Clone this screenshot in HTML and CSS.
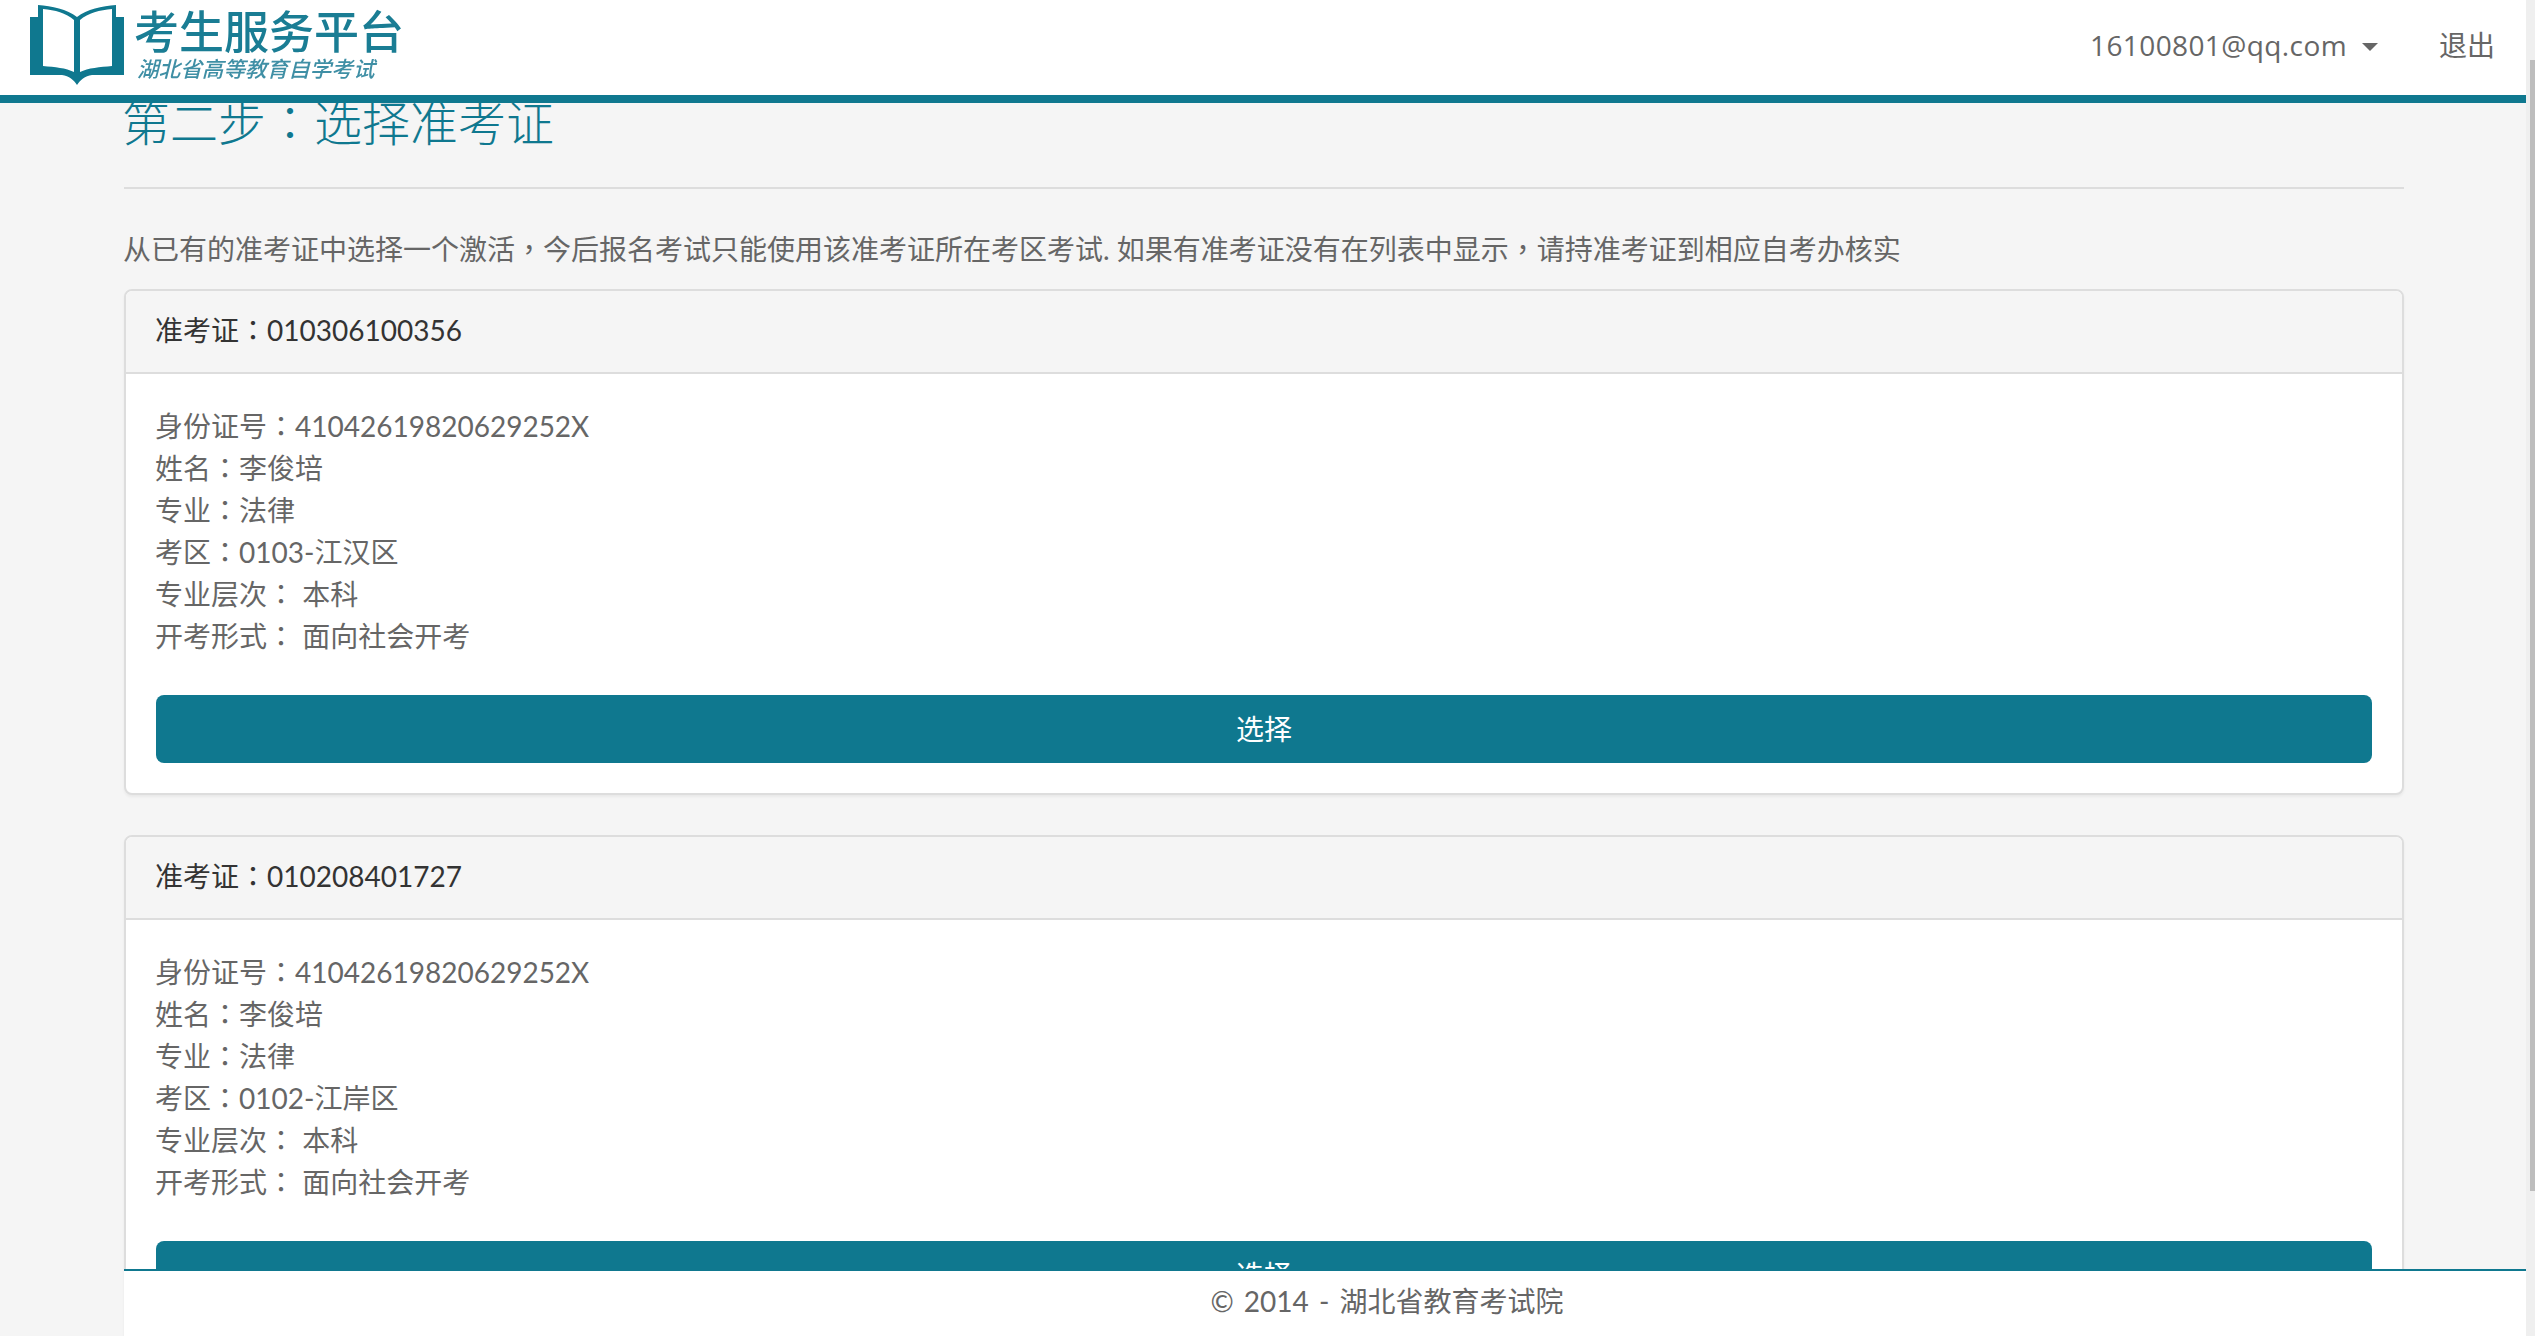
FILE: index.html
```html
<!DOCTYPE html>
<html lang="zh-CN">
<head>
<meta charset="utf-8">
<title>考生服务平台</title>
<link rel="stylesheet" href="styles.css">
</head>
<body>
<header class="topbar">
  <div class="brand">
    <svg class="brand-icon" viewBox="0 0 94 80" aria-hidden="true">
      <path fill="#0f788f" d="M0 12H8V0C22 1 37 4 47 12C57 4 72 1 86 0V12H94V70H62C55 71 50 75 47 80C44 75 39 71 32 70H0Z"/>
      <path fill="#fff" d="M13 4C25 5 36 8 44 15V67C36 63 25 62 13 61Z"/>
      <path fill="#fff" d="M82 4C70 5 58 8 50 15V67C58 63 70 62 82 61Z"/>
    </svg>
    <div class="brand-text">
      <div class="brand-name">考生服务平台</div>
      <div class="brand-sub">湖北省高等教育自学考试</div>
    </div>
  </div>
  <nav class="topnav">
    <span class="user">16100801@qq.com<i class="caret"></i></span>
    <span class="logout">退出</span>
  </nav>
</header>

<main class="content">
  <h1 class="title">第二步<span class="cp">：</span>选择准考证</h1>
  <hr class="rule">
  <p class="intro">从已有的准考证中选择一个激活<span class="cp">，</span>今后报名考试只能使用该准考证所在考区考试. 如果有准考证没有在列表中显示<span class="cp">，</span>请持准考证到相应自考办核实</p>

  <section class="panel">
    <div class="panel-head">准考证<span class="cp">：</span>010306100356</div>
    <div class="panel-body">
      <ul class="facts">
        <li>身份证号<span class="cp">：</span>41042619820629252X</li>
        <li>姓名<span class="cp">：</span>李俊培</li>
        <li>专业<span class="cp">：</span>法律</li>
        <li>考区<span class="cp">：</span>0103-江汉区</li>
        <li>专业层次<span class="cp">：</span> 本科</li>
        <li>开考形式<span class="cp">：</span> 面向社会开考</li>
      </ul>
      <button class="pick">选择</button>
    </div>
  </section>

  <section class="panel">
    <div class="panel-head">准考证<span class="cp">：</span>010208401727</div>
    <div class="panel-body">
      <ul class="facts">
        <li>身份证号<span class="cp">：</span>41042619820629252X</li>
        <li>姓名<span class="cp">：</span>李俊培</li>
        <li>专业<span class="cp">：</span>法律</li>
        <li>考区<span class="cp">：</span>0102-江岸区</li>
        <li>专业层次<span class="cp">：</span> 本科</li>
        <li>开考形式<span class="cp">：</span> 面向社会开考</li>
      </ul>
      <button class="pick">选择</button>
    </div>
  </section>
</main>

<footer class="footer">© 2014 - 湖北省教育考试院</footer>

<div class="scroll-track"><div class="scroll-thumb"></div></div>
</body>
</html>
```
FILE: styles.css
```css
* { box-sizing: border-box; }
html, body { height: 100%; }
body {
  margin: 0;
  overflow: hidden;
  background: #f5f5f5;
  color: #666;
  font-family: Lato, "Noto Sans CJK SC", sans-serif;
  font-size: 28px;
  line-height: 42px;
}
.cp { font-family: "Noto Sans CJK TC", sans-serif; font-feature-settings: "locl" 0; }
.topbar {
  position: fixed;
  top: 0;
  left: 0;
  right: 9px;
  height: 103px;
  z-index: 3;
  display: flex;
  align-items: flex-start;
  justify-content: space-between;
  background: #fff;
  border-bottom: 8px solid #0f788f;
}
.brand { display: flex; gap: 10px; padding: 5px 0 0 30px; }
.brand-icon { width: 94px; height: 80px; display: block; filter: blur(.5px); }
.brand-text { color: #1a7d94; filter: blur(.5px); }
.brand-name {
  font: 500 45px/50px "Noto Sans CJK SC", sans-serif;
  height: 50px;
}
.brand-sub {
  margin-left: 3px;
  font: italic 500 21.6px/26px "Noto Sans CJK SC", sans-serif;
  color: #3f8fa5;
  height: 26px;
}
.topnav { display: flex; align-items: center; height: 89px; padding-right: 31px; }
.user {
  display: flex;
  align-items: center;
  font-family: "Open Sans", sans-serif;
  letter-spacing: .4px;
}
.caret {
  width: 0;
  height: 0;
  margin: 4px 0 0 15px;
  border-top: 8px solid #666;
  border-left: 8px solid transparent;
  border-right: 8px solid transparent;
}
.logout { margin-left: 61px; }
.content {
  height: 100%;
  overflow: hidden;
  padding: 87px 131px 0 124px;
}
.title {
  margin: 0 0 0 -2px;
  height: 66px;
  color: #0f788f;
  font: 300 48px/66px "Noto Sans CJK SC", sans-serif;
}
.rule { height: 2px; margin: 34px 0 0; border: 0; background: #ddd; }
.intro { height: 42px; margin: 38px 0 20px -1px; color: #666; white-space: nowrap; }
.panel {
  margin-bottom: 40px;
  background: #fff;
  border: 2px solid #ddd;
  border-radius: 8px;
  box-shadow: 0 2px 3px rgba(0, 0, 0, .05);
}
.panel-head {
  height: 83px;
  padding: 17px 29px 0;
  color: #333;
  background: #f5f5f5;
  border-bottom: 2px solid #ddd;
  border-radius: 6px 6px 0 0;
}
.panel-body { padding: 30px; }
.facts { margin: 0 0 39px -1px; padding: 0; list-style: none; }
.facts li { height: 42px; }
.pick {
  display: block;
  width: 100%;
  height: 68px;
  padding: 0;
  color: #fff;
  font: inherit;
  background: #0f788f;
  border: 0;
  border-radius: 8px;
}
.footer {
  position: fixed;
  left: 124px;
  right: 9px;
  bottom: 0;
  height: 67px;
  z-index: 2;
  padding: 9px 0 0 124px;
  text-align: center;
  word-spacing: 3px;
  background: #fff;
  border-top: 2px solid #0f788f;
}
.scroll-track {
  position: fixed;
  top: 0;
  right: 0;
  bottom: 0;
  width: 9px;
  z-index: 4;
  background: #efefef;
}
.scroll-thumb { width: 5px; height: 1131px; margin: 60px 0 0 4px; background: #bdbdbd; }
```
